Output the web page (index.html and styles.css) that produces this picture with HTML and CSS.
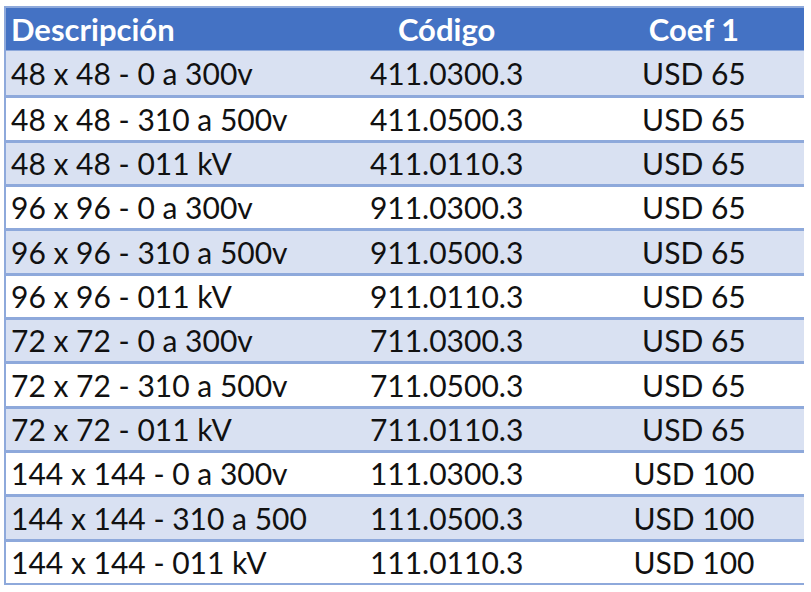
FILE: index.html
```html
<!DOCTYPE html>
<html lang="es">
<head>
<meta charset="utf-8">
<title>Tabla de precios</title>
<link rel="stylesheet" href="styles.css">
</head>
<body>
<div class="sheet">
  <table class="prices">
    <thead>
      <tr><th class="c1">Descripción</th><th class="c2">Código</th><th class="c3">Coef 1</th></tr>
    </thead>
    <tbody>
      <tr><td class="c1">48 x 48 - 0 a 300v</td><td class="c2">411.0300.3</td><td class="c3">USD 65</td></tr>
      <tr><td class="c1">48 x 48 - 310 a 500v</td><td class="c2">411.0500.3</td><td class="c3">USD 65</td></tr>
      <tr><td class="c1">48 x 48 - 011 kV</td><td class="c2">411.0110.3</td><td class="c3">USD 65</td></tr>
      <tr><td class="c1">96 x 96 - 0 a 300v</td><td class="c2">911.0300.3</td><td class="c3">USD 65</td></tr>
      <tr><td class="c1">96 x 96 - 310 a 500v</td><td class="c2">911.0500.3</td><td class="c3">USD 65</td></tr>
      <tr><td class="c1">96 x 96 - 011 kV</td><td class="c2">911.0110.3</td><td class="c3">USD 65</td></tr>
      <tr><td class="c1">72 x 72 - 0 a 300v</td><td class="c2">711.0300.3</td><td class="c3">USD 65</td></tr>
      <tr><td class="c1">72 x 72 - 310 a 500v</td><td class="c2">711.0500.3</td><td class="c3">USD 65</td></tr>
      <tr><td class="c1">72 x 72 - 011 kV</td><td class="c2">711.0110.3</td><td class="c3">USD 65</td></tr>
      <tr><td class="c1">144 x 144 - 0 a 300v</td><td class="c2">111.0300.3</td><td class="c3">USD 100</td></tr>
      <tr><td class="c1">144 x 144 - 310 a 500</td><td class="c2">111.0500.3</td><td class="c3">USD 100</td></tr>
      <tr><td class="c1">144 x 144 - 011 kV</td><td class="c2">111.0110.3</td><td class="c3">USD 100</td></tr>
    </tbody>
  </table>
</div>
</body>
</html>
```
FILE: styles.css
```css
html, body {
  margin: 0;
  padding: 0;
  background: #ffffff;
}
.sheet {
  padding: 6px 7px 0 4px;
}
.prices {
  width: 800px;
  border-collapse: collapse;
  font-family: Lato, "Liberation Sans", sans-serif;
  color: #111111;
  border-left: 2px solid #8ea9db;
  border-top: 2px solid #8ea9db;
  border-bottom: 2px solid #8ea9db;
}
.prices th {
  background: #4472c4;
  color: #ffffff;
  font-weight: 700;
  font-size: 31px;
  height: 42px;
  padding: 0;
  border-bottom: 1px solid #8ea9db;
  vertical-align: middle;
  line-height: 42px;
}
.prices td {
  font-size: 30px;
  height: 41.35px;
  line-height: 41px;
  padding: 0;
  border-top: 3px solid #8ea9db;
  vertical-align: middle;
}
.prices tbody tr:first-child td {
  border-top: none;
  height: 44.35px;
}
.prices tbody tr:nth-child(odd) td {
  background: #d9e1f2;
}
.prices tbody tr:nth-child(even) td {
  background: #ffffff;
}
.c1 {
  width: 300px;
  text-align: left;
  padding-left: 5px !important;
}
.c2 {
  width: 276px;
  text-align: center;
}
.c3 {
  width: 222px;
  text-align: center;
}
```
